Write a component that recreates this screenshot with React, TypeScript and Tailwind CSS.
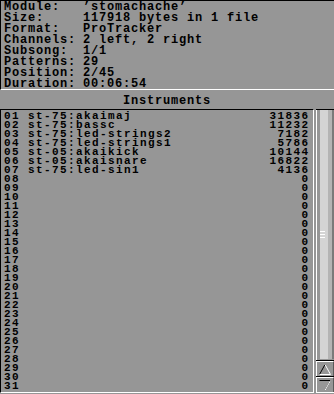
import React from 'react';

const info: [string, string][] = [
  ['Module:', '’stomachache’'],
  ['Size:', '117918 bytes in 1 file'],
  ['Format:', 'ProTracker'],
  ['Channels:', '2 left, 2 right'],
  ['Subsong:', '1/1'],
  ['Patterns:', '29'],
  ['Position:', '2/45'],
  ['Duration:', '00:06:54'],
];

const named: [string, number][] = [
  ['st-75:akaimaj', 31836],
  ['st-75:bassc', 11232],
  ['st-75:led-strings2', 7182],
  ['st-75:led-strings1', 5786],
  ['st-05:akaikick', 10144],
  ['st-05:akaisnare', 16822],
  ['st-75:led-sin1', 4136],
];

const instruments = Array.from({ length: 31 }, (_, i) => ({
  num: String(i + 1).padStart(2, '0'),
  name: named[i] ? named[i][0] : '',
  size: named[i] ? named[i][1] : 0,
}));

function ArrowButton({ up }: { up: boolean }) {
  return (
    <div className="h-[15px] flex items-center justify-center border-t border-l border-white border-r border-r-[#5a5a5a] bg-[#969696]">
      <svg width="12" height="11" viewBox="0 0 12 11">
        {up ? (
          <>
            <path d="M6 0.5 L0.5 10.5" stroke="#000" strokeWidth="1" fill="none" />
            <path d="M6 0.5 L11.5 10.5 L0.5 10.5" stroke="#fff" strokeWidth="1" fill="none" />
          </>
        ) : (
          <>
            <path d="M0.5 0.5 L11.5 0.5 L6 10.5" stroke="#000" strokeWidth="1" fill="none" />
            <path d="M6 10.5 L11.5 0.5" stroke="#fff" strokeWidth="1" fill="none" />
          </>
        )}
      </svg>
    </div>
  );
}

export default function App() {
  return (
    <div className="w-[334px] h-[394px] bg-[#969696] text-black font-['Liberation_Mono',monospace] font-bold text-[12px] tracking-[0.8px] flex flex-col overflow-hidden">
      <div className="h-[90px] shrink-0 border-t border-l border-black border-b border-b-white pl-[3px] pt-[1px]">
        {info.map(([label, value]) => (
          <div key={label} className="flex leading-[11px] whitespace-pre">
            <span className="w-[79px] shrink-0">{label}</span>
            <span>{value}</span>
          </div>
        ))}
      </div>
      <div className="h-[19px] shrink-0 leading-[11px] pt-[6px] text-center">Instruments</div>
      <div className="flex h-[284px]">
        <div className="w-[314px] border-t border-l border-black border-r border-b border-r-white border-b-white pl-[3px] pr-[5px] pt-[2px] text-[11px] tracking-[1.4px]">
          {instruments.map((ins) => (
            <div key={ins.num} className="flex leading-[9px] h-[9px] whitespace-pre">
              <span className="w-[24px] shrink-0">{ins.num}</span>
              <span className="flex-1">{ins.name}</span>
              <span className="mr-[-1.4px]">{ins.size}</span>
            </div>
          ))}
        </div>
        <div className="ml-[2px] w-[18px] flex flex-col border-t border-black border-b border-b-white">
          <div className="flex-1 flex border-l border-white pl-[3px] pb-[1px]">
            <div className="flex-1 flex bg-[#d4d4d4] items-center justify-center">
              <div className="flex flex-col gap-[2px] ml-[-4px]">
                <div className="w-[5px] h-[1px] bg-white" />
                <div className="w-[5px] h-[1px] bg-white" />
                <div className="w-[5px] h-[1px] bg-white" />
              </div>
            </div>
            <div className="w-[4px] bg-[#b4b4b4]" />
            <div className="w-[2px] bg-[#7a7a7a]" />
          </div>
          <div className="border-t border-black">
            <ArrowButton up />
          </div>
          <div className="border-t border-black">
            <ArrowButton up={false} />
          </div>
        </div>
      </div>
    </div>
  );
}
